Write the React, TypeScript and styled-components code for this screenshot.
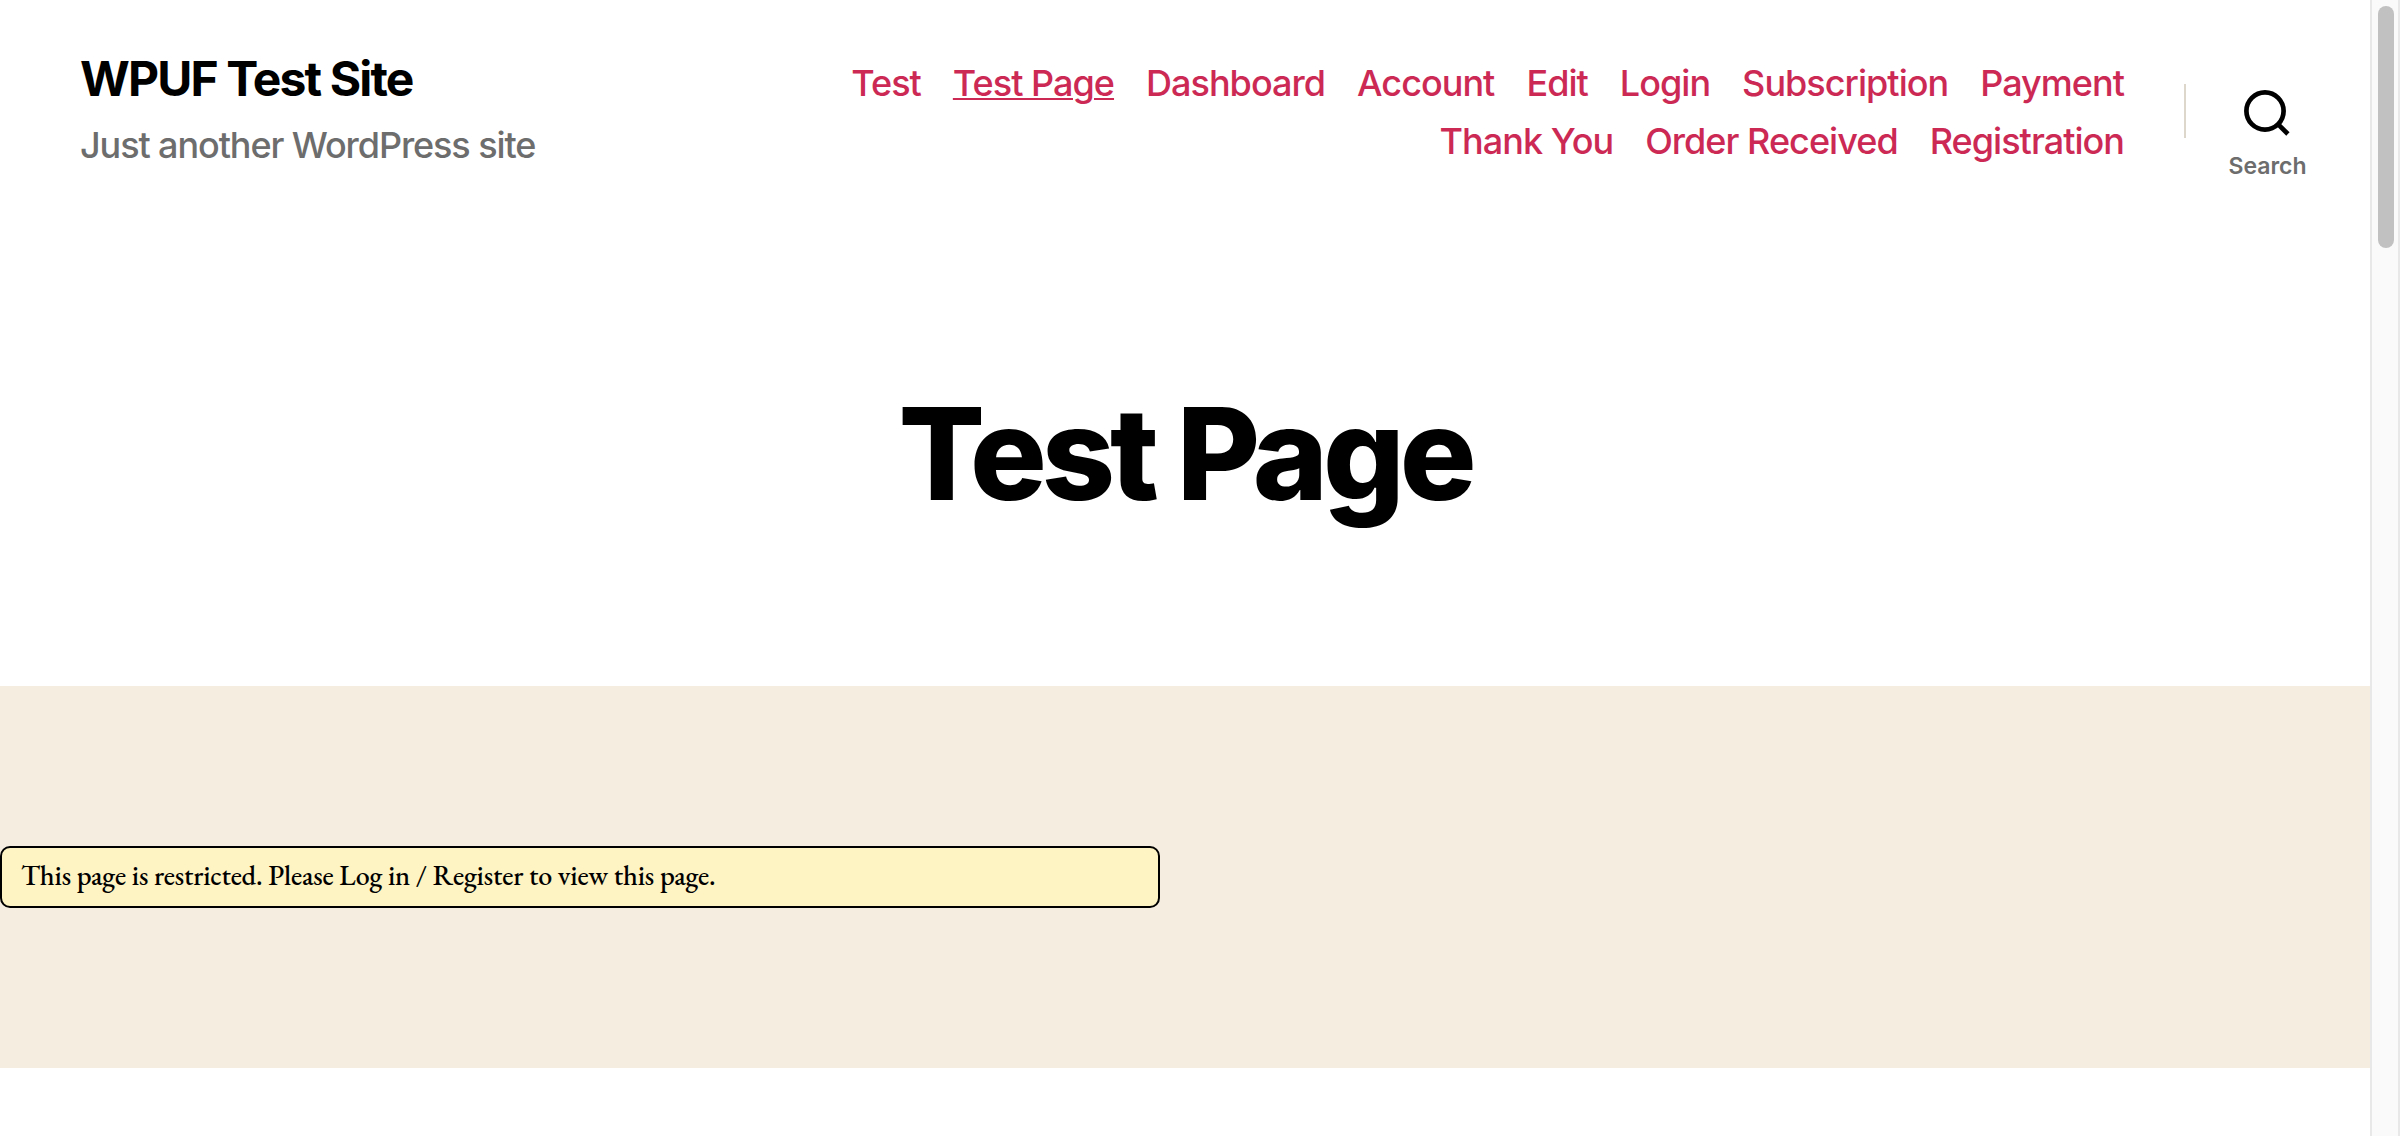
import React from "react";
import styled, { createGlobalStyle } from "styled-components";

const Global = createGlobalStyle`
  *, *::before, *::after { box-sizing: border-box; }
  body { margin: 0; background: #fff; font-family: Inter, "Liberation Sans", sans-serif; overflow: hidden; }
`;
const Frame = styled.div`display: flex; width: 2400px; height: 1136px; overflow: hidden;`;
const Page = styled.div`width: 2370px; flex: none; display: flex; flex-direction: column;`;
const Header = styled.header`height: 258px; flex: none; display: flex; padding: 0 18px 0 80px; background: #fff;`;
const Branding = styled.div`flex: 1; padding-top: 50px; white-space: nowrap;`;
const SiteTitle = styled.div`font-size: 48px; font-weight: 700; line-height: 58px; letter-spacing: -1.85px; color: #000;`;
const Tagline = styled.div`margin-top: 16px; font-size: 36px; font-weight: 500; line-height: 43px; letter-spacing: -1.1px; color: #6d6d6d;`;
const Nav = styled.nav`padding-top: 60px; display: flex; flex-direction: column; gap: 12px; align-items: flex-end;`;
const NavRow = styled.div`display: flex; gap: 32px;`;
const NavLink = styled.a<{ $active?: boolean }>`
  font-size: 36px; font-weight: 500; line-height: 46px; letter-spacing: -0.97px; white-space: nowrap;
  color: #cc2955; text-decoration: ${(p) => (p.$active ? "underline" : "none")};
  text-decoration-thickness: 2px; text-underline-offset: 2px;
`;
const Divider = styled.div`width: 2px; height: 54px; margin: 84px 0 0 60px; background: #dcd7ca;`;
const SearchButton = styled.button`
  width: 166px; height: 120px; margin-top: 84px; border: 0; padding: 4px 0 0; background: none; font-family: inherit;
  display: flex; flex-direction: column; align-items: center;
`;
const SearchLabel = styled.span`
  margin: 14px 3px 0 0; font-size: 23px; font-weight: 600; line-height: 28px; color: #6d6d6d;
`;
const TitleArea = styled.section`height: 428px; flex: none; display: flex; justify-content: center; padding-top: 118px;`;
const Title = styled.h1`margin: 0; font-size: 128px; font-weight: 800; line-height: 155px; letter-spacing: -5.1px; color: #000;`;
const Content = styled.main`height: 382px; flex: none; background: #f5eee0; padding-top: 160px;`;
const Notice = styled.div`
  width: 1160px; height: 62px; border: 2px solid #000; border-radius: 10px; background: #fef3c2; padding-left: 19px;
  font-family: "EB Garamond", "Liberation Serif", serif; font-size: 28px; font-weight: 500; line-height: 55px;
  letter-spacing: -0.18px; color: #000;
`;
const Scrollbar = styled.aside`
  width: 30px; border: solid #e8e8e8; border-width: 0 2px; background: #fafafa; padding: 6px 0 0 6px;
`;
const Thumb = styled.div`width: 16px; height: 242px; border-radius: 8px; background: #c1c1c1;`;

const firstRow = ["Test", "Test Page", "Dashboard", "Account", "Edit", "Login", "Subscription", "Payment"];
const secondRow = ["Thank You", "Order Received", "Registration"];

export default function App() {
  return (
    <Frame>
      <Global />
      <Page>
        <Header>
          <Branding>
            <SiteTitle>WPUF Test Site</SiteTitle>
            <Tagline>Just another WordPress site</Tagline>
          </Branding>
          <Nav>
            <NavRow>{firstRow.map((t) => <NavLink key={t} $active={t === "Test Page"}>{t}</NavLink>)}</NavRow>
            <NavRow>{secondRow.map((t) => <NavLink key={t}>{t}</NavLink>)}</NavRow>
          </Nav>
          <Divider />
          <SearchButton>
            <svg width="50" height="50" viewBox="0 0 50 50" fill="none" stroke="#000" strokeWidth="4.7">
              <circle cx="21" cy="23" r="18.6" /><path d="M34.2 36.4L43.9 46" />
            </svg>
            <SearchLabel>Search</SearchLabel>
          </SearchButton>
        </Header>
        <TitleArea><Title>Test Page</Title></TitleArea>
        <Content><Notice>This page is restricted. Please Log in / Register to view this page.</Notice></Content>
      </Page>
      <Scrollbar><Thumb /></Scrollbar>
    </Frame>
  );
}
